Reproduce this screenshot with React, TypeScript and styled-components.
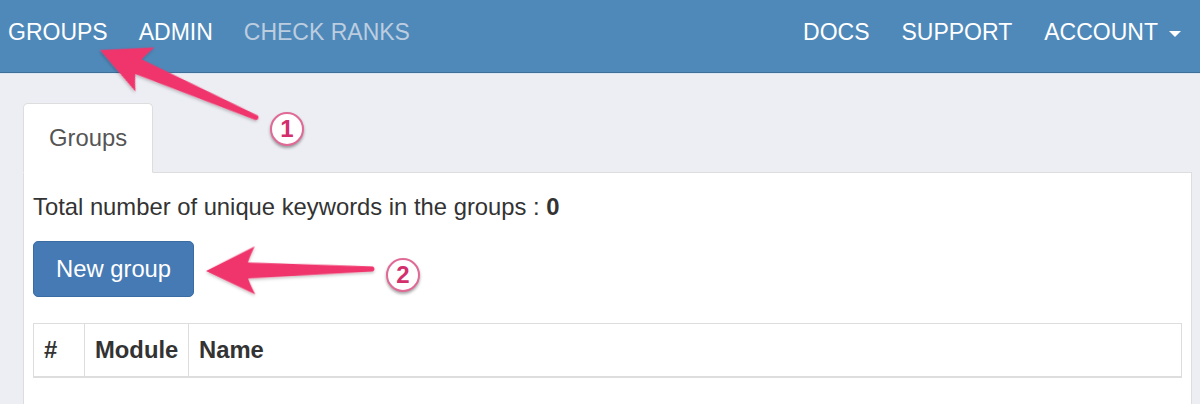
import React from 'react';
import styled, { createGlobalStyle } from 'styled-components';

const GlobalStyle = createGlobalStyle`
  html, body {
    margin: 0;
    padding: 0;
    background: #eceef3;
    font-family: "Liberation Sans", Arial, Helvetica, sans-serif;
    color: #333;
  }
`;

const Page = styled.div`
  position: relative;
  width: 1200px;
  height: 404px;
  overflow: hidden;
`;

const NavBar = styled.nav`
  display: flex;
  justify-content: space-between;
  height: 72px;
  background: #4f89b9;
  border-bottom: 1px solid #3e6f98;
  box-shadow: 0 1px 0 #dbe8f3;
`;

const NavGroup = styled.div<{ $side: 'left' | 'right' }>`
  display: flex;
  gap: ${(p) => (p.$side === 'left' ? '31px' : '32px')};
  padding: ${(p) => (p.$side === 'left' ? '0 0 0 8px' : '0 19px 0 0')};
`;

const NavLink = styled.a<{ $muted?: boolean }>`
  display: flex;
  align-items: center;
  padding-top: 21px;
  height: 23px;
  font-size: 23px;
  line-height: 23px;
  text-transform: uppercase;
  text-decoration: none;
  color: ${(p) => (p.$muted ? '#bccde0' : '#ffffff')};
  cursor: pointer;
`;

const Caret = styled.span`
  display: inline-block;
  margin-left: 11px;
  margin-top: 2px;
  border-top: 6px solid #ffffff;
  border-left: 6px solid transparent;
  border-right: 6px solid transparent;
`;

const Main = styled.main`
  padding: 30px 8px 0 23px;
`;

const TabList = styled.div`
  display: flex;
`;

const Tab = styled.div`
  position: relative;
  z-index: 1;
  margin-bottom: -1px;
  padding: 17px 25px 17px 25px;
  font-size: 23.8px;
  line-height: 34px;
  color: #555;
  background: #ffffff;
  border: 1px solid #dddddd;
  border-bottom-color: #ffffff;
  border-radius: 5px 5px 0 0;
`;

const Panel = styled.section`
  min-height: 260px;
  padding: 17px 9px 0 9px;
  background: #ffffff;
  border: 1px solid #dddddd;
  border-bottom: none;
`;

const Summary = styled.p`
  margin: 0 0 17px 0;
  font-size: 23.8px;
  line-height: 34px;
  color: #333;

  strong {
    font-weight: bold;
  }
`;

const Button = styled.button`
  display: block;
  height: 56px;
  padding: 0 22px;
  font-family: inherit;
  font-size: 23.8px;
  line-height: 34px;
  color: #ffffff;
  background: #467ab4;
  border: 1px solid #3a6ca4;
  border-radius: 5px;
  cursor: pointer;
`;

const Table = styled.table`
  width: 100%;
  margin-top: 26px;
  table-layout: fixed;
  border-collapse: collapse;
  font-size: 23.8px;
`;

const HeadCell = styled.th<{ $width?: number }>`
  box-sizing: border-box;
  width: ${(p) => (p.$width ? `${p.$width}px` : 'auto')};
  padding: 9px 10px 10px 10px;
  line-height: 33px;
  text-align: left;
  font-weight: bold;
  white-space: nowrap;
  color: #333;
  border: 1px solid #dddddd;
  border-bottom-width: 2px;
`;

const Overlay = styled.svg`
  position: absolute;
  left: 0;
  top: 0;
  pointer-events: none;
  overflow: visible;
`;

const Badge = styled.div<{ $x: number; $y: number }>`
  position: absolute;
  left: ${(p) => p.$x - 17}px;
  top: ${(p) => p.$y - 17}px;
  width: 30px;
  height: 30px;
  display: flex;
  align-items: center;
  justify-content: center;
  border: 2px solid #e06a95;
  border-radius: 50%;
  background: #ffffff;
  box-shadow: 0 2px 3px rgba(0, 0, 0, 0.35);
  font-size: 24px;
  font-weight: bold;
  color: #d22f6c;
`;

const arrowPath = (len: number, tail: number) =>
  `M0,0 L49,-24 Q44,-14 42,-8 L${len},-${tail} Q${len + 3},0 ${len},${tail} L42,8 Q44,14 49,24 Z`;

const Arrow: React.FC<{ x: number; y: number; angle: number; len: number }> = ({ x, y, angle, len }) => (
  <path
    d={arrowPath(len, 2.5)}
    transform={`translate(${x} ${y}) rotate(${angle})`}
    fill="#f0356c"
    filter="url(#arrowShadow)"
  />
);

export default function App() {
  return (
    <Page>
      <GlobalStyle />
      <NavBar>
        <NavGroup $side="left">
          <NavLink>Groups</NavLink>
          <NavLink>Admin</NavLink>
          <NavLink $muted>Check ranks</NavLink>
        </NavGroup>
        <NavGroup $side="right">
          <NavLink>Docs</NavLink>
          <NavLink>Support</NavLink>
          <NavLink>
            Account
            <Caret />
          </NavLink>
        </NavGroup>
      </NavBar>

      <Main>
        <TabList>
          <Tab>Groups</Tab>
        </TabList>
        <Panel>
          <Summary>
            Total number of unique keywords in the groups : <strong>0</strong>
          </Summary>
          <Button>New group</Button>
          <Table>
            <thead>
              <tr>
                <HeadCell $width={51}>#</HeadCell>
                <HeadCell $width={104}>Module</HeadCell>
                <HeadCell>Name</HeadCell>
              </tr>
            </thead>
          </Table>
        </Panel>
      </Main>

      <Overlay width="1200" height="404" viewBox="0 0 1200 404">
        <defs>
          <filter id="arrowShadow" x="-20%" y="-50%" width="140%" height="200%">
            <feDropShadow dx="0" dy="1.5" stdDeviation="1.5" floodColor="#000" floodOpacity="0.25" />
          </filter>
        </defs>
        <Arrow x={100} y={50} angle={23.4} len={171} />
        <Arrow x={206} y={271} angle={-0.7} len={167} />
      </Overlay>
      <Badge $x={287} $y={129}>1</Badge>
      <Badge $x={403} $y={275}>2</Badge>
    </Page>
  );
}
